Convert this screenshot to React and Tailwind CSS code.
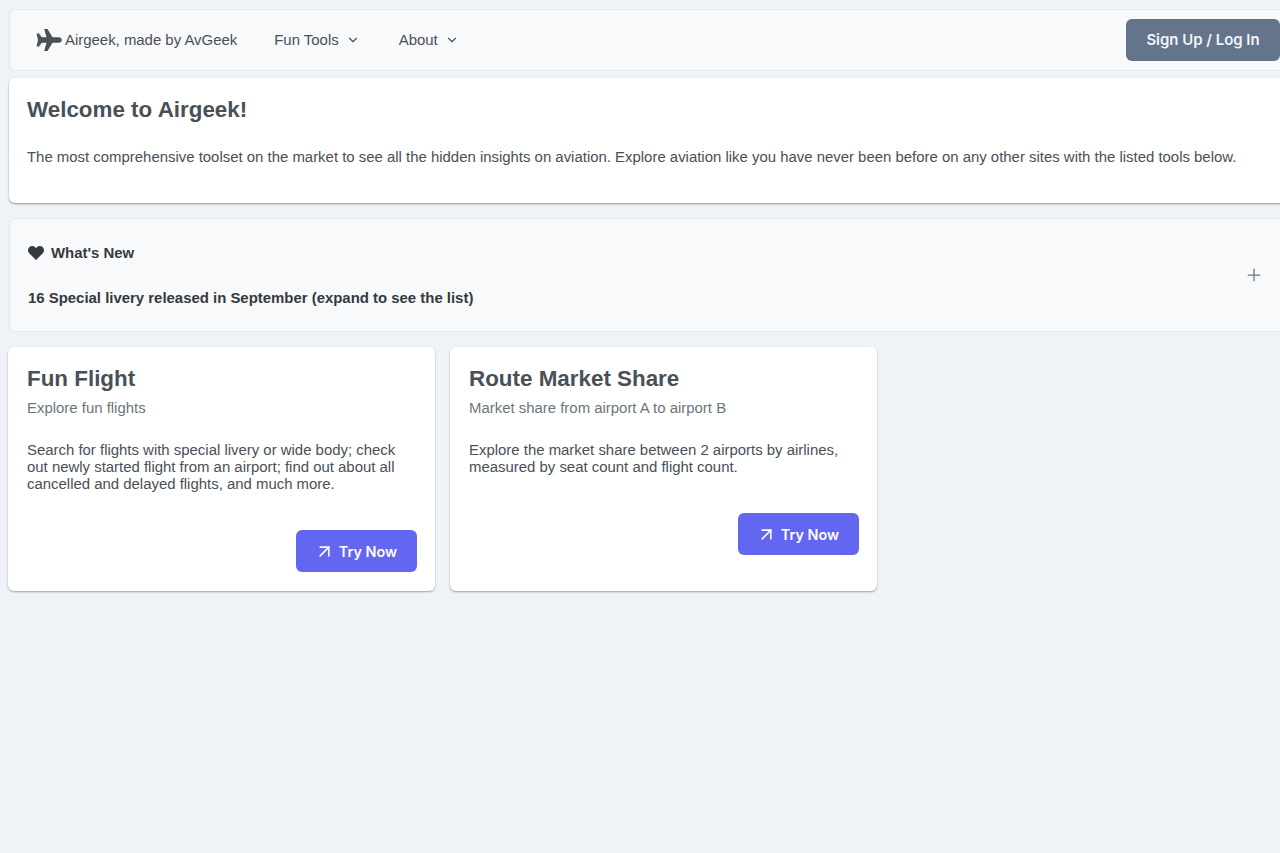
import React from "react";
import { ChevronDown, Plus, ArrowUpRight } from "lucide-react";

function Plane() {
  return (
    <svg width="26" height="24" viewBox="0 0 26 24" className="shrink-0">
      <path
        fill="#495057"
        d="M0.5 5.5 L3 5.5 L5.8 9.2 L10.5 9.2 L8.2 1 L11.5 1 L16.5 9.2 L22.5 9.2 C24.5 9.2 25.8 10.6 25.8 12 C25.8 13.4 24.5 14.8 22.5 14.8 L16.5 14.8 L11.5 23 L8.2 23 L10.5 14.8 L5.8 14.8 L3 18.5 L0.5 18.5 L2 12 Z"
      />
    </svg>
  );
}

function Card({ title, sub, body }) {
  return (
    <div className="w-[427px] h-[244px] bg-white rounded-md shadow-[0_1px_2px_rgba(0,0,0,0.35)] pl-[19px] pr-[18px] pt-[19px] flex flex-col">
      <h2 className="text-[22.4px] leading-[26px] font-bold text-[#495057]">{title}</h2>
      <p className="text-[14.93px] leading-[17px] mt-[7px] text-[#6c757d]">{sub}</p>
      <p className="text-[14.93px] leading-[17px] mt-[25px] text-[#495057]">{body}</p>
      <div className="flex justify-end mt-[38px]">
        <button className="w-[121px] h-[42px] rounded-md bg-[#6366f1] text-white text-[14.4px] font-semibold flex items-center justify-center gap-[4px] pr-[2px] pt-[1px] font-['Inter',sans-serif]">
          <ArrowUpRight size={21} strokeWidth={1.75} className="-mt-[1px]" />
          Try Now
        </button>
      </div>
    </div>
  );
}

export default function App() {
  return (
    <div className="w-[1280px] h-[853px] overflow-hidden bg-[#eff3f8] font-['Liberation_Sans',Arial,sans-serif] pl-[8px] pt-[9px]">
      <nav className="ml-[1px] w-[1290px] h-[62px] bg-[#f8f9fa] border border-[#e4e8ec] rounded-md flex items-center pl-[26px] pr-[18px] text-[14.93px] text-[#495057]">
        <Plane />
        <span className="ml-[3px]">Airgeek, made by AvGeek</span>
        <span className="ml-[37px]">Fun Tools</span>
        <ChevronDown size={14} className="ml-[7px]" />
        <span className="ml-[39px]">About</span>
        <ChevronDown size={14} className="ml-[7px]" />
        <button className="ml-auto w-[154px] h-[42px] rounded-md bg-[#64748b] text-[#f1f5f9] text-[14.93px] font-semibold font-['Inter',sans-serif]">
          Sign Up / Log In
        </button>
      </nav>

      <section className="ml-[1px] mt-[7px] w-[1290px] h-[125px] bg-white rounded-md shadow-[0_1px_2px_rgba(0,0,0,0.4)] pl-[18px] pt-[19px]">
        <h1 className="text-[22.4px] leading-[26px] font-bold text-[#495057]">Welcome to Airgeek!</h1>
        <p className="mt-[25px] text-[14.93px] leading-[17px] text-[#495057]">
          The most comprehensive toolset on the market to see all the hidden insights on aviation. Explore aviation like you have never been before on any other sites with the listed tools below.
        </p>
      </section>

      <section className="ml-[1px] mt-[15px] w-[1290px] h-[114px] bg-[#f8f9fa] border border-[#e4e8ec] rounded-md flex items-center pl-[18px] pr-[27px]">
        <div className="flex-1 text-[14.93px] font-bold text-[#343a40]">
          <div className="flex items-center gap-[7px] leading-[17px]">
            <svg width="16" height="14" viewBox="0 0 16 14" className="shrink-0">
              <path fill="#343a40" d="M8 14 L1.4 7.4 C-0.4 5.6 -0.4 2.8 1.2 1.2 C2.9 -0.4 5.6 -0.3 7.2 1.3 L8 2.2 L8.8 1.3 C10.4 -0.3 13.1 -0.4 14.8 1.2 C16.4 2.8 16.4 5.6 14.6 7.4 Z" />
            </svg>
            What's New
          </div>
          <div className="mt-[28px] leading-[17px]">16 Special livery released in September (expand to see the list)</div>
        </div>
        <Plus size={20} strokeWidth={1.5} className="text-[#6c757d] mr-[7px]" />
      </section>

      <div className="mt-[15px] flex gap-[15px]">
        <Card
          title="Fun Flight"
          sub="Explore fun flights"
          body="Search for flights with special livery or wide body; check out newly started flight from an airport; find out about all cancelled and delayed flights, and much more."
        />
        <Card
          title="Route Market Share"
          sub="Market share from airport A to airport B"
          body="Explore the market share between 2 airports by airlines, measured by seat count and flight count."
        />
      </div>
    </div>
  );
}
